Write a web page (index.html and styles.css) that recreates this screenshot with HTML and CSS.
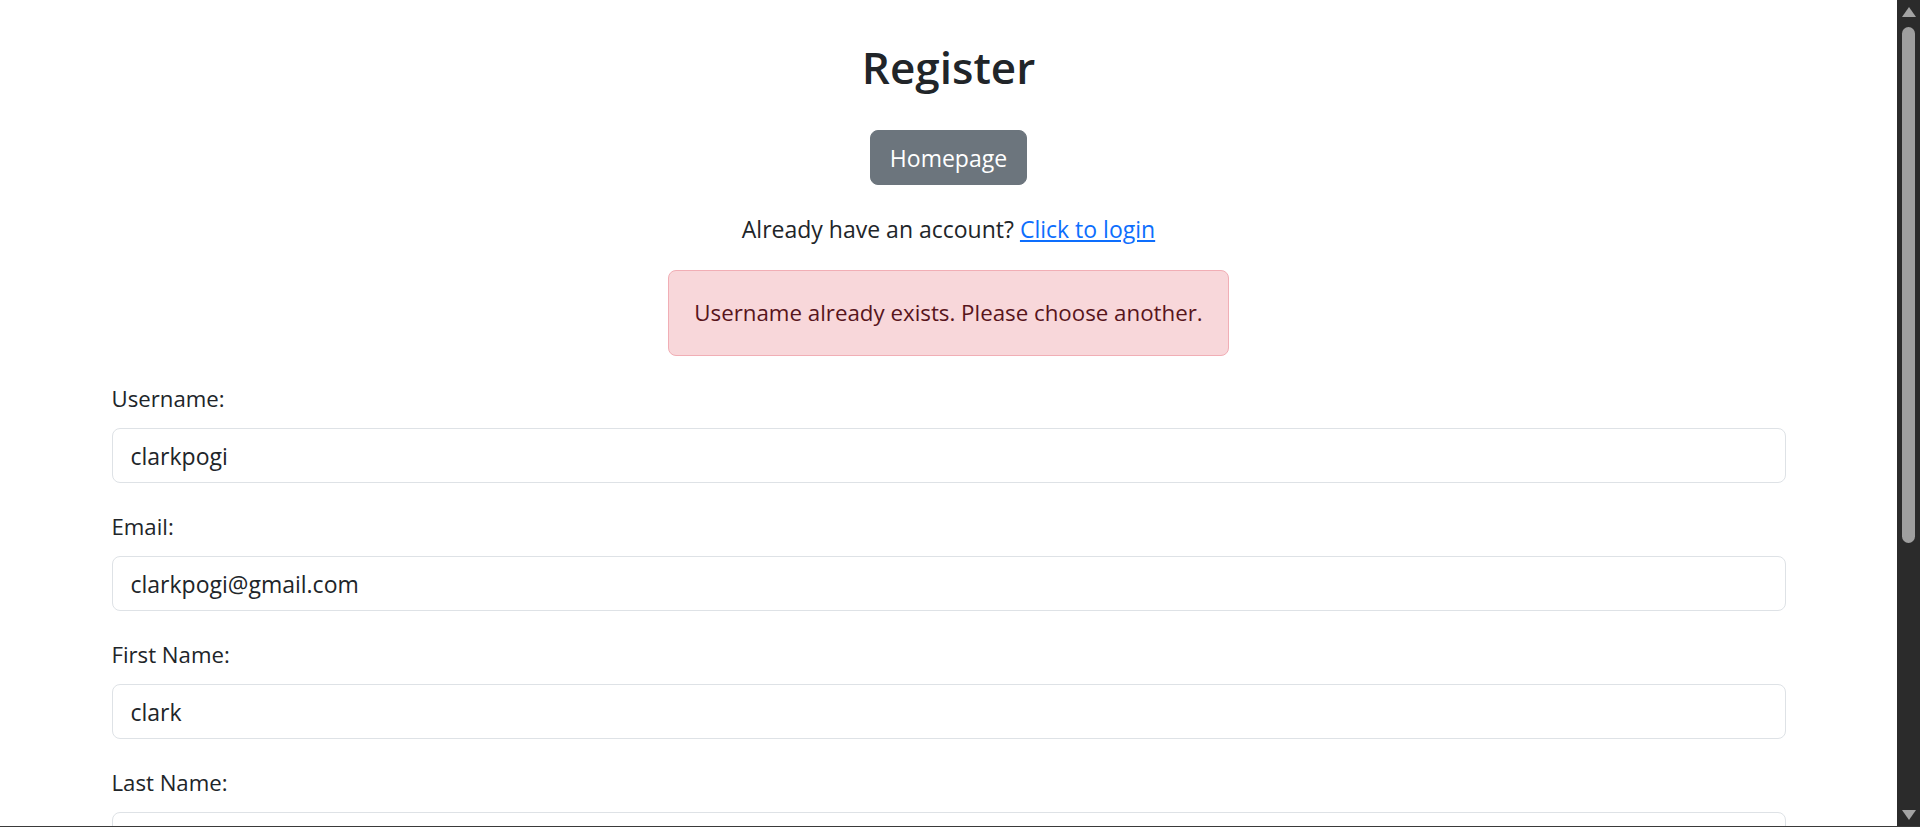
FILE: index.html
```html
<!DOCTYPE html>
<html lang="en">
<head>
<meta charset="utf-8">
<title>Register</title>
<link rel="stylesheet" href="styles.css">
</head>
<body>
<div class="window">
  <main class="page">
    <div class="container">
      <h2 class="title">Register</h2>
      <div class="center btn-row"><a class="btn" href="#">Homepage</a></div>
      <p class="login-note">Already have an account? <a class="link" href="#">Click to login</a></p>
      <div class="center alert-row"><div class="alert">Username already exists. Please choose another.</div></div>
      <form class="form">
        <div class="field">
          <label class="label" for="username">Username:</label>
          <input class="input" id="username" type="text" value="clarkpogi">
        </div>
        <div class="field">
          <label class="label" for="email">Email:</label>
          <input class="input" id="email" type="text" value="clarkpogi@gmail.com">
        </div>
        <div class="field">
          <label class="label" for="first">First Name:</label>
          <input class="input" id="first" type="text" value="clark">
        </div>
        <div class="field">
          <label class="label" for="last">Last Name:</label>
          <input class="input" id="last" type="text" value="pogi">
        </div>
      </form>
    </div>
  </main>
  <div class="scrollbar">
    <span class="arrow arrow-up"></span>
    <div class="track"><div class="thumb"></div></div>
    <span class="arrow arrow-down"></span>
  </div>
</div>
</body>
</html>
```
FILE: styles.css
```css
html, body {
  margin: 0;
  padding: 0;
  height: 100%;
  overflow: hidden;
  background: #ffffff;
}
body {
  font-family: "Open Sans", "Noto Sans", "Liberation Sans", sans-serif;
  font-size: 20px;
  line-height: 30px;
  color: #212529;
}
.window {
  display: flex;
  height: 826px;
  border-bottom: 1px solid #3a3a3a;
}
.page {
  flex: 1;
  overflow: hidden;
  min-width: 0;
}
.container {
  max-width: 1674px;
  margin: 0 auto;
  padding-top: 43px;
}
.title {
  margin: 0;
  font-size: 44px;
  line-height: 48px;
  font-weight: 600;
  text-align: center;
}
.center {
  display: flex;
  justify-content: center;
}
.btn-row {
  margin-top: 39px;
}
.btn {
  display: inline-block;
  padding: 11.5px 19px;
  font-size: 23px;
  line-height: 30px;
  border: 1px solid #6c757d;
  border-radius: 8px;
  background: #6c757d;
  color: #ffffff;
  text-decoration: none;
}
.login-note {
  margin: 29px 0 0;
  font-size: 23px;
  text-align: center;
}
.link {
  color: #0d6efd;
  text-decoration: underline;
}
.alert-row {
  margin-top: 26px;
}
.alert {
  padding: 27px 25px;
  font-size: 22.3px;
  background: #f8d7da;
  border: 1px solid #f1aeb5;
  border-radius: 8px;
  color: #58151c;
}
.form {
  margin-top: 28px;
}
.field {
  display: flex;
  flex-direction: column;
  margin-bottom: 29px;
}
.label {
  margin-bottom: 14px;
  font-size: 22.2px;
}
.input {
  box-sizing: border-box;
  width: 100%;
  height: 55px;
  margin: 0;
  padding: 11.5px 18px;
  font-family: inherit;
  font-size: 23px;
  line-height: 30px;
  color: #212529;
  background: #ffffff;
  border: 1px solid #dee2e6;
  border-radius: 8px;
  outline: none;
}
.scrollbar {
  width: 23px;
  flex: none;
  background: #2b2b2b;
  display: flex;
  flex-direction: column;
  align-items: center;
  padding: 7px 0 6px;
  box-sizing: border-box;
}
.arrow {
  width: 0;
  height: 0;
  border-left: 7px solid transparent;
  border-right: 7px solid transparent;
  flex: none;
}
.arrow-up {
  border-bottom: 10px solid #a3a3a3;
}
.arrow-down {
  border-top: 10px solid #a3a3a3;
}
.track {
  flex: 1;
  width: 100%;
  display: flex;
  justify-content: center;
  padding-top: 10px;
}
.thumb {
  width: 13px;
  height: 516px;
  border-radius: 7px;
  background: #9f9f9f;
}
```
